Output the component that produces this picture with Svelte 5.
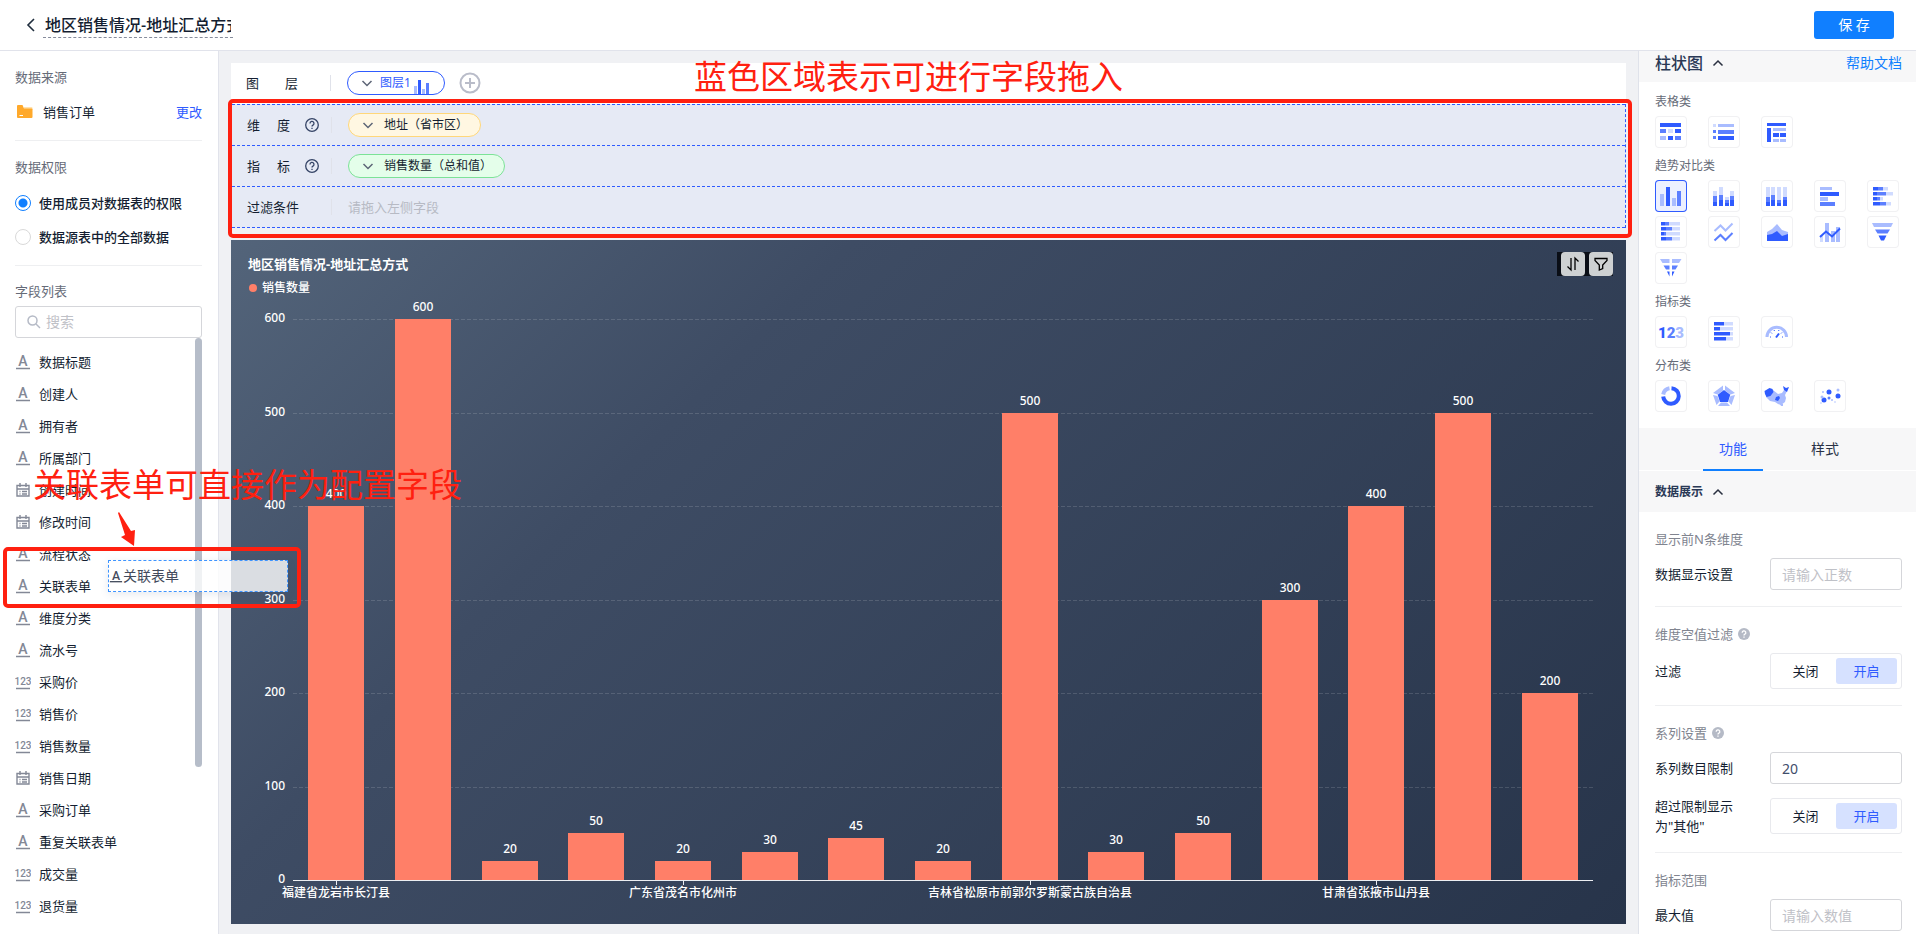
<script>
  let reportName = '地区销售情况-地址汇总方式';
  let permission = 'member';
  let keyword = '';
  let activeType = 'bar';
  let activeTab = '功能';
  let topN = '';
  let seriesLimit = '20';
  let maxValue = '';
  let filterEmpty = true;
  let mergeOthers = true;

  const fields = [
    { name: '数据标题', type: 'text' },
    { name: '创建人', type: 'text' },
    { name: '拥有者', type: 'text' },
    { name: '所属部门', type: 'text' },
    { name: '创建时间', type: 'date' },
    { name: '修改时间', type: 'date' },
    { name: '流程状态', type: 'text' },
    { name: '关联表单', type: 'text' },
    { name: '维度分类', type: 'text' },
    { name: '流水号', type: 'text' },
    { name: '采购价', type: 'number' },
    { name: '销售价', type: 'number' },
    { name: '销售数量', type: 'number' },
    { name: '销售日期', type: 'date' },
    { name: '采购订单', type: 'text' },
    { name: '重复关联表单', type: 'text' },
    { name: '成交量', type: 'number' },
    { name: '退货量', type: 'number' }
  ];

  $: visibleFields = fields.filter((f) => f.name.includes(keyword));

  // icon shades, dark to pale
  const D = '#2f5bff';
  const M = '#5c7fff';
  const L = '#a9bcff';
  const P = '#d0dbff';

  const box = (x, y, w, h, fill) => ({ d: `M${x} ${y}h${w}v${h}h${-w}z`, fill });
  const shape = (d, fill) => ({ d, fill });
  const line = (d, stroke, width = 2) => ({ d, stroke, width });
  const dot = (x, y, r, fill) => ({
    d: `M${x - r} ${y}a${r} ${r} 0 1 0 ${r * 2} 0a${r} ${r} 0 1 0 ${-r * 2} 0z`,
    fill
  });

  // column: pale top, then medium, then dark down to the base line
  const column = (x, top, mid, low) => [
    box(x, top, 4, mid - top, P),
    box(x, mid, 4, low - mid, M),
    box(x, low, 4, 26 - low, D)
  ];
  const strip = (y, a, b, c) => [
    box(6, y, a, 3.5, D),
    box(6 + a, y, b, 3.5, M),
    box(6 + a + b, y, c, 3.5, P)
  ];

  const chartGroups = [
    {
      name: '表格类',
      items: [
        {
          id: 'table', title: '明细表',
          parts: [
            box(5, 7, 21, 4, D),
            box(5, 13, 6, 4, M), box(13, 13, 5, 4, P), box(20, 13, 6, 4, D),
            box(5, 20, 6, 4, L), box(13, 20, 5, 4, D), box(20, 20, 6, 4, M)
          ]
        },
        {
          id: 'list', title: '列表',
          parts: [
            box(5, 8, 3, 3, P), box(10, 8, 16, 3, L),
            box(5, 14, 3, 3, M), box(10, 14, 16, 4, M),
            box(5, 20, 3, 3, M), box(10, 20, 16, 4, D)
          ]
        },
        {
          id: 'pivot', title: '透视表',
          parts: [
            box(6, 7, 19, 3, D), box(6, 12, 4, 14, D), box(12, 12, 13, 3, L),
            box(12, 17, 6, 4, D), box(19, 17, 6, 4, D),
            box(12, 23, 6, 3, L), box(19, 23, 6, 3, L)
          ]
        }
      ]
    },
    {
      name: '趋势对比类',
      items: [
        {
          id: 'bar', title: '柱状图',
          parts: [box(5, 14, 4, 12, L), box(11, 7, 4, 19, D), box(17, 18, 4, 8, L), box(22, 11, 4, 15, M)]
        },
        {
          id: 'stack', title: '堆积柱状图',
          parts: [...column(5, 11, 16, 22), ...column(11, 7, 15, 20), ...column(17, 17, 20, 23), ...column(22, 11, 16, 20)]
        },
        {
          id: 'percent', title: '百分比柱状图',
          parts: [...column(5, 7, 17, 22), ...column(10, 7, 15, 20), ...column(16, 7, 20, 23), ...column(22, 7, 17, 20)]
        },
        {
          id: 'hbar', title: '条形图',
          parts: [box(6, 7, 12, 3, L), box(6, 12, 19, 4, D), box(6, 17, 8, 4, L), box(6, 22, 15, 4, M)]
        },
        {
          id: 'hstack', title: '堆积条形图',
          parts: [...strip(7, 5, 5, 5), ...strip(12, 4, 9, 7), ...strip(17, 4, 3, 3), ...strip(22, 7, 6, 5)]
        },
        {
          id: 'hpercent', title: '百分比条形图',
          parts: [...strip(6, 4, 4, 11), ...strip(11, 5, 6, 8), ...strip(16, 3, 2, 14), ...strip(21, 5, 6, 8)]
        },
        {
          id: 'line', title: '折线图',
          parts: [line('M6.5 15l6-5.500 5 5 7-7', L), line('M6.500 24.500l6-5.500 5 5 7-7', M)]
        },
        {
          id: 'area', title: '面积图',
          parts: [shape('M6 25V16l5-3 5-5 5 6 6 2v9z', L), shape('M6 25v-6l5-1 5-3 5 5 6-2v7z', D)]
        },
        {
          id: 'combo', title: '组合图',
          parts: [
            box(6, 19, 3, 7, P), box(11, 7, 4, 19, L), box(17, 15, 4, 11, L), box(22, 11, 4, 15, L),
            line('M6 21l6-5.500 6 5 8-8', D)
          ]
        },
        {
          id: 'funnel', title: '漏斗图',
          parts: [
            shape('M5 7h21l-2 4H7z', L), shape('M8 13.500h15l-2.500 4h-10z', M), shape('M11.500 19.500h8l-2.500 5h-3z', D)
          ]
        },
        {
          id: 'compare', title: '对比漏斗图',
          parts: [
            shape('M5 7h9.500v4H7.500z', L), shape('M17 7h9.500L24 11h-7z', L),
            shape('M8.500 13.500h6v4H11z', M), shape('M17 13.500h6l-2.500 4H17z', M),
            shape('M12 19.500h2.500v5z', D), shape('M17 19.500h2.500L17 24.500z', D)
          ]
        }
      ]
    },
    {
      name: '指标类',
      items: [
        { id: 'metric', title: '指标图', digits: true, parts: [] },
        {
          id: 'progress', title: '进度图',
          parts: [...strip(6, 10, 0, 9), ...strip(11, 6, 0, 13), ...strip(16, 16, 0, 3), ...strip(21, 12, 0, 7)]
        },
        {
          id: 'gauge', title: '仪表盘',
          parts: [
            line('M6 21a9.700 9.700 0 0 1 19.500 0', L, 3),
            line('M10 21h-1M11 17.500l-1-1M13.500 15l-.5-1M17.500 15l.5-1M20 17.500l1-1M21 21h1', D, 1),
            line('M15 21.500l3-4', D, 2)
          ]
        }
      ]
    },
    {
      name: '分布类',
      items: [
        {
          id: 'pie', title: '饼图',
          parts: [line('M16.500 8.200a7.800 7.800 0 1 1-8.300 8.300', D, 4), line('M8.200 14.500a7.800 7.800 0 0 1 6.300-6.200', L, 4)]
        },
        {
          id: 'radar', title: '雷达图',
          parts: [
            shape('M15 5.500v5L9.500 14.500 5 13zM17 5.500v5l5.500 4L27 13zM5 15l4.500 1 2 5.500-3 3.500zM27 15l-4.500 1-2 5.500 3 3.500zM10 26l3-3.500h6l3 3.500z', L),
            shape('M16 10l6.300 4.700-2.300 7.300h-8L9.700 14.700z', D)
          ]
        },
        {
          id: 'map', title: '地图',
          parts: [
            shape('M5 15l7-5 5 4 4-1 2-3 3 1-2 4 1 3-1 4-4 3-3-1-3-2-5-1-4-4z', L),
            shape('M19 24h3v2h-2z', L),
            shape('M3.500 11l5-3 3 1 1 3-3 4-4 1-1.500-3z', D),
            shape('M15 17l3-1 1 2-2 3-3-1z', D),
            shape('M22 6l3 2 3-1-2 5-3-2z', D)
          ]
        },
        {
          id: 'scatter', title: '散点图',
          parts: [
            dot(15, 12, 2.5, D), dot(10, 20, 2.5, D), dot(24, 16, 2.5, D), dot(15, 18, 1.5, M),
            dot(24, 10, 1.5, L), dot(8, 17, 1.5, L), dot(9, 12, 1, L), dot(18, 20, 1, L), dot(7, 23, 1, P), dot(21, 22, 1, P)
          ]
        }
      ]
    }
  ];

  const sales = [400, 600, 20, 50, 20, 30, 45, 20, 500, 30, 50, 300, 400, 500, 200];
  const regions = {
    0: '福建省龙岩市长汀县',
    4: '广东省茂名市化州市',
    8: '吉林省松原市前郭尔罗斯蒙古族自治县',
    12: '甘肃省张掖市山丹县'
  };
  const ticks = [0, 100, 200, 300, 400, 500, 600];
  const pad = { left: 62, right: 33, top: 19, bottom: 44 };

  let plotWidth = 0;
  let plotHeight = 0;

  $: step = Math.max(plotWidth - pad.left - pad.right, 0) / sales.length;
  $: barWidth = Math.round(step * 0.65);
  $: baseY = plotHeight - pad.bottom;
  $: scaleY = (v) => Math.round(baseY - (v / 600) * (baseY - pad.top));
  $: centerX = (i) => Math.round(pad.left + step * (i + 0.5));
</script>

{#snippet chevron(up)}
  <svg class="chevron" width="12" height="12" viewBox="0 0 12 12" aria-hidden="true">
    <path d={up ? 'M1.500 8.500L6 4l4.500 4.500' : 'M1.500 4L6 8.500 10.500 4'} />
  </svg>
{/snippet}

{#snippet fieldIcon(type)}
  <svg class="field-icon" width="16" height="16" viewBox="0 0 16 16" aria-hidden="true">
    {#if type === 'date'}
      <path d="M2 3.500h12V14H2zM2 7h12M5 1v4M11 1v4M4.500 9.500h1M7 9.500h5M4.500 12h1M7 12h5" fill="none" stroke="currentColor" stroke-width="1.400" />
    {:else}
      {#if type === 'number'}
        <text x="8" y="11" font-size="10" font-weight="500">123</text>
      {:else}
        <text x="8" y="12" font-size="14" font-weight="500">A</text>
      {/if}
      <path d="M1 14.500h14" stroke="currentColor" stroke-width="1.500" />
    {/if}
  </svg>
{/snippet}

{#snippet helpRing()}
  <svg class="help-ring" width="16" height="16" viewBox="0 0 16 16" aria-hidden="true">
    <circle cx="8" cy="8" r="6.300" />
    <path d="M6 6.500a2 2 0 1 1 3 1.600c-.7.400-1 .7-1 1.400" />
    <path d="M8 10.700v1.300" />
  </svg>
{/snippet}

{#snippet helpDot()}
  <svg class="help-dot" width="14" height="14" viewBox="0 0 14 14" aria-hidden="true">
    <circle cx="7" cy="7" r="6" fill="#b5bac6" />
    <path d="M5.200 5.700a1.800 1.800 0 1 1 2.700 1.500c-.6.300-.9.600-.9 1.200M7 9.500v1.200" fill="none" stroke="#fff" stroke-width="1.300" />
  </svg>
{/snippet}

<div class="page">
  <header class="topbar">
    <button class="back" aria-label="返回">
      <svg width="10" height="16" viewBox="0 0 10 16"><path d="M8 2L2 8l6 6" fill="none" stroke="#1f2d3d" stroke-width="1.600" /></svg>
    </button>
    <input class="report-name" aria-label="报表名称" bind:value={reportName} />
    <button class="save">保 存</button>
  </header>

  <div class="body">
    <aside class="sidebar">
      <section class="side-section">
        <h3>数据来源</h3>
        <div class="source">
          <svg width="16" height="14" viewBox="0 0 16 14" aria-hidden="true">
            <path d="M7 2h7.500a1 1 0 0 1 1 1v2H7z" fill="#ffe2b0" />
            <path d="M1 0h4.500l1.500 3.500h7.500a1 1 0 0 1 1 1V12a1 1 0 0 1-1 1H1a1 1 0 0 1-1-1V1a1 1 0 0 1 1-1z" fill="#ffa92b" />
            <path d="M2.500 10.500h3.500" stroke="#fff" />
          </svg>
          <span>销售订单</span>
          <a href="#source">更改</a>
        </div>
      </section>

      <section class="side-section">
        <h3>数据权限</h3>
        <label class="radio">
          <input type="radio" name="permission" value="member" bind:group={permission} />
          使用成员对数据表的权限
        </label>
        <label class="radio">
          <input type="radio" name="permission" value="all" bind:group={permission} />
          数据源表中的全部数据
        </label>
      </section>

      <section class="side-fields">
        <h3>字段列表</h3>
        <label class="search">
          <svg width="14" height="14" viewBox="0 0 14 14" aria-hidden="true">
            <circle cx="5.500" cy="5.500" r="4.500" /><path d="M9 9l4 4" />
          </svg>
          <input type="text" aria-label="搜索字段" placeholder="搜索" bind:value={keyword} />
        </label>
        <div class="field-scroll">
          <ul>
            {#each visibleFields as field}
              <li>{@render fieldIcon(field.type)}{field.name}</li>
            {/each}
          </ul>
          <div class="thumb"></div>
        </div>
      </section>
    </aside>

    <main class="workspace">
      <div class="layer-row">
        <span class="row-label wide"><i>图</i><i>层</i></span>
        <span class="sep"></span>
        <button class="pill layer">
          {@render chevron(false)}
          图层1
          <svg class="layer-bars" width="16" height="16" viewBox="0 0 16 16" aria-hidden="true">
            <path d="M0 8h3v8H0zM8 11h3v5H8z" fill={L} />
            <path d="M4 2h3v14H4z" fill={D} />
            <path d="M12 5h3v11h-3z" fill={M} />
          </svg>
        </button>
        <button class="add" aria-label="添加图层">
          <svg width="22" height="22" viewBox="0 0 22 22"><circle cx="11" cy="11" r="9.500" /><path d="M11 6v10M6 11h10" /></svg>
        </button>
      </div>

      <div class="drop-area">
        <div class="drop-row">
          <span class="row-label"><i>维</i><i>度</i></span>
          {@render helpRing()}
          <span class="sep"></span>
          <button class="pill dimension">{@render chevron(false)}地址（省市区）</button>
        </div>
        <div class="drop-row">
          <span class="row-label"><i>指</i><i>标</i></span>
          {@render helpRing()}
          <span class="sep"></span>
          <button class="pill metric">{@render chevron(false)}销售数量（总和值）</button>
        </div>
        <div class="drop-row">
          <span class="row-label wide">过滤条件</span>
          <span class="sep"></span>
          <span class="placeholder">请拖入左侧字段</span>
        </div>
        <div class="mark mark-drop"></div>
      </div>

      <section class="chart">
        <div class="chart-head">
          <h2>{reportName}</h2>
          <div class="chart-tools">
            <button aria-label="排序">
              <svg width="16" height="16" viewBox="0 0 16 16"><path d="M2.500 10.500L6 14V2M10 14V2l3.500 3.500" /></svg>
            </button>
            <button aria-label="筛选">
              <svg width="16" height="16" viewBox="0 0 16 16"><path d="M2 2.500h12v2L9.700 9v3.500L6.300 14V9L2 4.500z" /></svg>
            </button>
          </div>
        </div>
        <div class="legend"><span class="legend-dot"></span>销售数量</div>
        <div class="plot" bind:clientWidth={plotWidth} bind:clientHeight={plotHeight}>
          {#if plotWidth && plotHeight}
            <svg width={plotWidth} height={plotHeight} role="img" aria-label="销售数量柱状图">
              {#each ticks as tick}
                <text class="axis" x={pad.left - 8} y={scaleY(tick) + 3} text-anchor="end">{tick}</text>
                {#if tick}
                  <line class="gridline" x1={pad.left} x2={plotWidth - pad.right} y1={scaleY(tick) + 0.5} y2={scaleY(tick) + 0.5} />
                {/if}
              {/each}
              {#each sales as value, i}
                <rect class="bar" x={centerX(i) - Math.floor(barWidth / 2)} y={scaleY(value)} width={barWidth} height={baseY - scaleY(value)} />
                <text class="axis" x={centerX(i)} y={scaleY(value) - 8} text-anchor="middle">{value}</text>
                {#if regions[i]}
                  <path class="baseline" d={`M${centerX(i) + 0.5} ${baseY}v5`} />
                  <text class="axis" x={centerX(i)} y={baseY + 17} text-anchor="middle">{regions[i]}</text>
                {/if}
              {/each}
              <path class="baseline" d={`M${pad.left} ${baseY + 0.5}H${plotWidth - pad.right}`} />
            </svg>
          {/if}
        </div>
      </section>

      <p class="note note-drop">蓝色区域表示可进行字段拖入</p>
    </main>

    <aside class="panel">
      <div class="panel-head">
        <h2>柱状图</h2>
        {@render chevron(true)}
        <a href="#help">帮助文档</a>
      </div>

      <div class="types">
        {#each chartGroups as group}
          <h4>{group.name}</h4>
          <div class="type-grid">
            {#each group.items as item}
              <button
                class="type"
                class:active={activeType === item.id}
                aria-label={item.title}
                on:click={() => (activeType = item.id)}
              >
                <svg width="32" height="32" viewBox="0 0 32 32">
                  {#if item.digits}
                    <text class="digits" x="16" y="22" text-anchor="middle"><tspan fill={D}>1</tspan><tspan fill={M}>2</tspan><tspan fill={L}>3</tspan></text>
                  {/if}
                  {#each item.parts as part}
                    <path d={part.d} fill={part.fill || 'none'} stroke={part.stroke} stroke-width={part.width} />
                  {/each}
                </svg>
              </button>
            {/each}
          </div>
        {/each}
      </div>

      <nav class="tabs">
        {#each ['功能', '样式'] as tab}
          <button class:active={activeTab === tab} on:click={() => (activeTab = tab)}>{tab}</button>
        {/each}
      </nav>

      <div class="group-head">
        <h3>数据展示</h3>
        {@render chevron(true)}
      </div>

      <div class="settings">
        <section>
          <h4>显示前N条维度</h4>
          <div class="setting">
            <label for="top-n">数据显示设置</label>
            <input id="top-n" type="text" placeholder="请输入正数" bind:value={topN} />
          </div>
        </section>
        <section>
          <h4>维度空值过滤 {@render helpDot()}</h4>
          <div class="setting">
            <span>过滤</span>
            <div class="switch" role="group" aria-label="过滤">
              <button class:on={!filterEmpty} on:click={() => (filterEmpty = false)}>关闭</button>
              <button class:on={filterEmpty} on:click={() => (filterEmpty = true)}>开启</button>
            </div>
          </div>
        </section>
        <section>
          <h4>系列设置 {@render helpDot()}</h4>
          <div class="setting">
            <label for="series-limit">系列数目限制</label>
            <input id="series-limit" type="text" bind:value={seriesLimit} />
          </div>
          <div class="setting">
            <span>超过限制显示为"其他"</span>
            <div class="switch" role="group" aria-label="超过限制显示为其他">
              <button class:on={!mergeOthers} on:click={() => (mergeOthers = false)}>关闭</button>
              <button class:on={mergeOthers} on:click={() => (mergeOthers = true)}>开启</button>
            </div>
          </div>
        </section>
        <section>
          <h4>指标范围</h4>
          <div class="setting">
            <label for="max-value">最大值</label>
            <input id="max-value" type="text" placeholder="请输入数值" bind:value={maxValue} />
          </div>
        </section>
      </div>
    </aside>
  </div>

  <!-- field being dragged, with its callout -->
  <div class="drag-ghost">{@render fieldIcon('text')}关联表单</div>
  <p class="note note-drag">关联表单可直接作为配置字段</p>
  <svg class="arrow" width="20" height="36" viewBox="0 0 20 36" aria-hidden="true">
    <path d="M0 1l1-1 12 19 4-1-1 16L3 25l4-2z" fill="#ff2010" />
  </svg>
  <div class="mark mark-drag"></div>
</div>

<style>
  :global(body) {
    font-family: 'Noto Sans', 'Noto Sans CJK SC', sans-serif;
    font-size: 13px;
    line-height: 20px;
    color: #141e31;
  }

  .page {
    position: relative;
    display: flex;
    flex-direction: column;
    height: 100vh;
    overflow: hidden;
    background: #f0f1f4;
  }

  h2, h3, h4, p, ul {
    margin: 0;
    padding: 0;
    font-weight: 400;
  }

  button, input {
    box-sizing: border-box;
    margin: 0;
    font: inherit;
    color: inherit;
  }

  button {
    padding: 0;
    border: 0;
    background: none;
    cursor: pointer;
  }

  a {
    text-decoration: none;
  }

  svg {
    flex: none;
    display: block;
  }

  i {
    font-style: normal;
  }

  .chevron path {
    fill: none;
    stroke: #5d6577;
    stroke-width: 1.5;
  }

  /* top bar */
  .topbar {
    display: flex;
    align-items: center;
    height: 50px;
    flex: none;
    padding: 0 22px 0 26px;
    background: #fff;
    border-bottom: 1px solid #e1e3eb;
  }

  .report-name {
    width: 190px;
    height: 26px;
    margin-left: 7px;
    padding: 0 2px 2px;
    border: 0;
    border-bottom: 1px dashed #868c9c;
    background: none;
    font-size: 16px;
    font-weight: 500;
    outline: none;
  }

  .save {
    width: 80px;
    height: 28px;
    margin-left: auto;
    border-radius: 3px;
    background: #107fff;
    color: #fff;
    font-size: 14px;
  }

  .body {
    display: flex;
    flex: 1;
    min-height: 0;
  }

  /* left column */
  .sidebar {
    display: flex;
    flex-direction: column;
    width: 187px;
    flex: none;
    padding: 0 16px 0 15px;
    background: #fff;
    border-right: 1px solid #e1e3eb;
  }

  .side-section {
    padding: 16px 0 18px;
    border-bottom: 1px solid #eeeff1;
  }

  .sidebar h3 {
    font-size: 13px;
    color: #666b78;
  }

  .source {
    display: flex;
    align-items: center;
    gap: 10px;
    margin-top: 15px;
    padding-left: 2px;
  }

  .source a {
    margin-left: auto;
    color: #2f5bff;
  }

  .radio {
    display: flex;
    align-items: center;
    gap: 8px;
    margin-top: 14px;
    font-weight: 500;
  }

  h3 + .radio {
    margin-top: 16px;
  }

  .radio input {
    appearance: none;
    width: 16px;
    height: 16px;
    border: 1px solid #d9d9d9;
    border-radius: 50%;
    background: #fff;
  }

  .radio input:checked {
    border-color: #107fff;
    background: radial-gradient(circle, #107fff 4px, #fff 5px);
  }

  .side-fields {
    display: flex;
    flex-direction: column;
    flex: 1;
    min-height: 0;
    padding-top: 15px;
  }

  .search {
    display: flex;
    align-items: center;
    gap: 5px;
    height: 30px;
    flex: none;
    margin-top: 5px;
    padding-left: 11px;
    border: 1px solid #d5d6da;
    border-radius: 3px;
  }

  .search svg {
    fill: none;
    stroke: #b5bac6;
    stroke-width: 1.5;
  }

  .search input {
    width: 100%;
    min-width: 0;
    padding: 0;
    border: 0;
    outline: none;
    font-size: 14px;
  }

  input::placeholder {
    color: #bfc1c7;
    opacity: 1;
  }

  .field-scroll {
    position: relative;
    flex: 1;
    min-height: 0;
    overflow: hidden;
  }

  .field-scroll ul {
    padding-top: 8px;
    list-style: none;
  }

  .field-scroll li {
    display: flex;
    align-items: center;
    gap: 8px;
    height: 32px;
  }

  .field-icon {
    color: #838896;
  }

  .field-icon text {
    font-family: Roboto, sans-serif;
    fill: currentColor;
    text-anchor: middle;
  }

  .thumb {
    position: absolute;
    top: 0;
    right: 0;
    width: 7px;
    height: 72%;
    border-radius: 4px;
    background: #b6bdc9;
  }

  /* middle column */
  .workspace {
    position: relative;
    display: flex;
    flex-direction: column;
    flex: 1;
    min-width: 0;
    padding: 12px 12px 10px;
  }

  .layer-row,
  .drop-row {
    display: flex;
    align-items: center;
    padding-left: 15px;
  }

  .layer-row {
    height: 39px;
    padding-bottom: 2px;
    background: #fff;
  }

  .row-label {
    display: flex;
    justify-content: space-between;
    width: 43px;
  }

  .row-label.wide {
    width: 52px;
  }

  .sep {
    width: 1px;
    height: 16px;
    margin: 0 16px 0 32px;
    background: #e0e2ea;
  }

  .help-ring {
    margin-left: 14px;
    fill: none;
    stroke: #354466;
    stroke-width: 1.3;
  }

  .help-ring ~ .sep {
    margin-left: 11px;
  }

  .pill {
    display: flex;
    align-items: center;
    gap: 10px;
    height: 24px;
    padding: 0 12px 0 13px;
    border: 1px solid;
    border-radius: 12px;
    font-size: 12px;
  }

  .pill.layer {
    gap: 3px;
    padding-right: 14px;
    background: #fff;
    border-color: #2f5bff;
    color: #2f5bff;
  }

  .pill.layer .chevron {
    margin-right: 4px;
  }

  .layer-bars {
    align-self: flex-end;
  }

  .pill.dimension {
    background: #fff7e2;
    border-color: #ffd77a;
    color: #141e31;
  }

  .pill.metric {
    background: #e4feea;
    border-color: #7ce297;
    color: #141e31;
  }

  .add {
    margin-left: 14px;
  }

  .add svg {
    fill: none;
    stroke: #b9bcc9;
    stroke-width: 2;
  }

  .drop-area {
    position: relative;
    border: dashed #2f5bff;
    border-width: 0 1px;
    margin-bottom: 12px;
  }

  .drop-row {
    height: 40px;
    background: #e6eaf5;
    border-top: 1px dashed #2f5bff;
  }

  .drop-row:nth-child(3) {
    border-bottom: 1px dashed #2f5bff;
  }

  .placeholder {
    color: #b7bac4;
  }

  .chart {
    display: flex;
    flex-direction: column;
    flex: 1;
    min-height: 0;
    background: linear-gradient(135deg, #53647a 0%, #3e4c64 30%, #27344a 100%);
    color: #fff;
  }

  .chart-head {
    display: flex;
    align-items: center;
    justify-content: space-between;
    padding: 12px 13px 0 17px;
  }

  .chart-head h2 {
    font-size: 13px;
    font-weight: 700;
  }

  .chart-tools {
    display: flex;
    gap: 4px;
    padding-left: 4px;
    background: #0a0e16;
  }

  .chart-tools button {
    display: flex;
    align-items: center;
    justify-content: center;
    width: 24px;
    height: 24px;
    border-radius: 4px;
    background: #ced1d2;
  }

  .chart-tools svg {
    fill: none;
    stroke: #000;
    stroke-width: 1.3;
  }

  .legend {
    display: flex;
    align-items: center;
    gap: 5px;
    height: 24px;
    padding-left: 18px;
    font-size: 12px;
    font-weight: 500;
  }

  .legend-dot {
    width: 8px;
    height: 8px;
    border-radius: 50%;
    background: #ff7f68;
  }

  .plot {
    flex: 1;
    min-height: 0;
  }

  .plot svg {
    overflow: visible;
  }

  .axis {
    font-size: 12px;
    font-weight: 500;
    fill: #fff;
  }

  .gridline {
    stroke: #fff;
    stroke-opacity: 0.14;
    stroke-dasharray: 4 2;
  }

  .bar {
    fill: #ff7f68;
  }

  .baseline {
    fill: none;
    stroke: #eceef2;
  }

  /* right column */
  .panel {
    width: 277px;
    flex: none;
    overflow: hidden;
    background: #fff;
    border-left: 1px solid #dfe2ea;
  }

  .panel .chevron path {
    stroke: #2a3040;
  }

  .panel-head,
  .group-head {
    display: flex;
    align-items: center;
    gap: 9px;
    background: #f7f7f8;
  }

  .panel-head {
    height: 23px;
    padding: 0 14px 8px 16px;
  }

  .panel-head h2 {
    font-size: 16px;
    font-weight: 500;
    color: #2a3956;
  }

  .panel-head a {
    margin-left: auto;
    color: #107fff;
    font-size: 14px;
  }

  .types {
    padding: 10px 0 8px 16px;
  }

  .types h4 {
    height: 20px;
    margin-bottom: 4px;
    font-size: 12px;
    color: #666b78;
  }

  .type-grid {
    display: grid;
    grid-template-columns: repeat(5, 32px);
    gap: 4px 21px;
    margin-bottom: 8px;
  }

  .type {
    height: 32px;
    border-radius: 4px;
    box-shadow: inset 0 0 0 1px #f1f1f3;
  }

  .type.active {
    background: #ecf0ff;
    box-shadow: inset 0 0 0 1px #2f5bff;
  }

  .digits {
    font-family: Roboto, sans-serif;
    font-size: 15px;
    font-weight: 900;
  }

  .tabs {
    display: flex;
    justify-content: center;
    gap: 32px;
    height: 43px;
    padding-left: 3px;
    background: #f7f7f8;
    box-shadow: inset 0 -1px #fff;
  }

  .tabs button {
    width: 60px;
    border-bottom: 2px solid transparent;
    color: #2a3347;
    font-size: 14px;
  }

  .tabs .active {
    border-color: #107fff;
    color: #2f5bff;
  }

  .group-head {
    height: 41px;
    padding-left: 16px;
  }

  .group-head h3 {
    font-size: 12px;
    font-weight: 700;
    color: #2a3956;
  }

  .settings {
    padding: 0 14px 0 16px;
  }

  .settings section {
    padding: 17px 0 16px;
    border-bottom: 1px solid #eeeff1;
  }

  .settings h4 {
    display: flex;
    align-items: center;
    gap: 4px;
    margin-bottom: 9px;
    font-size: 13px;
    color: #80848f;
  }

  .setting {
    display: flex;
    align-items: center;
    justify-content: space-between;
  }

  .setting + .setting {
    margin-top: 12px;
  }

  .setting > label,
  .setting > span {
    width: 84px;
  }

  .setting input {
    width: 132px;
    height: 32px;
    padding: 0 11px;
    border: 1px solid #d5d6da;
    border-radius: 3px;
    color: #3f4d6b;
    font-size: 14px;
  }

  .switch {
    display: flex;
    box-sizing: border-box;
    width: 132px;
    height: 36px;
    padding: 4px;
    border: 1px solid #e8e9ed;
    border-radius: 3px;
  }

  .switch button {
    flex: 1;
    border-radius: 3px;
  }

  .switch .on {
    background: #d6e1ff;
    color: #2f5bff;
  }

  /* callouts lying over the page */
  .note {
    position: absolute;
    color: #ff2010;
    font-size: 33px;
    line-height: 40px;
    white-space: nowrap;
  }

  .note-drop {
    top: 6px;
    left: 475px;
  }

  .note-drag {
    top: 465px;
    left: 33px;
  }

  .mark {
    position: absolute;
    border: 4px solid #ff2010;
    border-radius: 5px;
    pointer-events: none;
  }

  .mark-drop {
    inset: -5px -7px -10px -4px;
  }

  .mark-drag {
    top: 547px;
    left: 3px;
    width: 290px;
    height: 53px;
  }

  .arrow {
    position: absolute;
    top: 512px;
    left: 118px;
  }

  .drag-ghost {
    position: absolute;
    top: 560px;
    left: 108px;
    display: flex;
    align-items: center;
    width: 178px;
    height: 30px;
    border: 1px dashed #3e94ff;
    background: rgba(255, 255, 255, 0.8);
    box-shadow: 0 2px 8px rgba(60, 80, 120, 0.12);
    color: #434b5c;
    font-size: 14px;
  }

  .drag-ghost .field-icon {
    width: 14px;
    color: #434b5c;
  }
</style>
